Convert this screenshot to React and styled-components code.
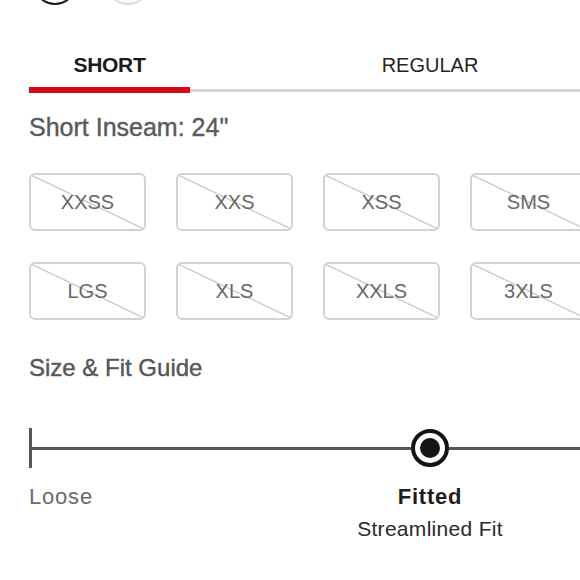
import React, { useState } from 'react';
import styled, { createGlobalStyle } from 'styled-components';

const GlobalStyle = createGlobalStyle`
  html, body {
    margin: 0;
    padding: 0;
    background: #fff;
    overflow: hidden;
  }
  body {
    font-family: 'Liberation Sans', Arial, sans-serif;
  }
`;

const tabs = ['SHORT', 'REGULAR'];
const sizes = ['XXSS', 'XXS', 'XSS', 'SMS', 'LGS', 'XLS', 'XXLS', '3XLS'];

export default function App() {
  const [active, setActive] = useState('SHORT');

  return (
    <>
      <GlobalStyle />
      <Viewport>
        <Panel>
          <Swatches>
            <Swatch $selected />
            <Swatch />
          </Swatches>

          <TabList>
            {tabs.map((t) => (
              <Tab key={t} onClick={() => setActive(t)}>
                <TabLabel $active={active === t}>{t}</TabLabel>
                <TabTrack>
                  <TabBar $active={active === t} />
                </TabTrack>
              </Tab>
            ))}
          </TabList>

          <Inseam>Short Inseam: 24"</Inseam>

          <SizeGrid>
            {sizes.map((s) => (
              <SizeChip key={s} disabled>
                {s}
              </SizeChip>
            ))}
          </SizeGrid>

          <GuideTitle>Size &amp; Fit Guide</GuideTitle>

          <Slider>
            <Tick />
            <Line $width='379px' />
            <Knob>
              <KnobDot />
            </Knob>
            <Line />
          </Slider>

          <Labels>
            <Loose>Loose</Loose>
            <FitBlock>
              <FitName>Fitted</FitName>
              <FitNote>Streamlined Fit</FitNote>
            </FitBlock>
          </Labels>
        </Panel>
      </Viewport>
    </>
  );
}

const Viewport = styled.div`
  width: 580px;
  height: 580px;
  overflow: hidden;
`;

const Panel = styled.div`
  width: 900px;
  padding-left: 29px;
  box-sizing: border-box;
`;

const Swatches = styled.div`
  display: flex;
  gap: 29px;
  margin-top: -39px;
  padding-left: 4px;
`;

const Swatch = styled.div`
  width: 44px;
  height: 44px;
  border-radius: 50%;
  box-sizing: border-box;
  border: 2px solid ${(p) => (p.$selected ? '#1c1c1c' : '#dcdcdc')};
`;

const TabList = styled.div`
  display: grid;
  grid-template-columns: 161px 480px;
  margin-top: 48px;
`;

const Tab = styled.div`
  display: flex;
  flex-direction: column;
  cursor: pointer;
`;

const TabLabel = styled.div`
  text-align: center;
  font-size: ${(p) => (p.$active ? '21px' : '20px')};
  line-height: 24px;
  font-weight: ${(p) => (p.$active ? 700 : 400)};
  color: ${(p) => (p.$active ? '#1a1a1a' : '#242424')};
  letter-spacing: ${(p) => (p.$active ? '-0.3px' : '0')};
  padding-bottom: 10px;
`;

const TabTrack = styled.div`
  height: 6px;
  display: flex;
  align-items: center;
`;

const TabBar = styled.div`
  width: 100%;
  height: ${(p) => (p.$active ? '6px' : '3px')};
  background: ${(p) => (p.$active ? '#d20a1c' : '#d4d4d4')};
`;

const Inseam = styled.div`
  margin-top: 19px;
  font-size: 25px;
  line-height: 30px;
  color: #5a5a5a;
  -webkit-text-stroke: 0.4px #5a5a5a;
`;

const SizeGrid = styled.div`
  display: grid;
  grid-template-columns: repeat(4, 117px);
  grid-auto-rows: 58px;
  column-gap: 30px;
  row-gap: 31px;
  margin-top: 31px;
`;

const SizeChip = styled.button`
  box-sizing: border-box;
  border: 2px solid #d2d2d2;
  border-radius: 6px;
  background: linear-gradient(
    to top right,
    transparent calc(50% - 1px),
    #d0d0d0 calc(50% - 0.5px),
    #d0d0d0 calc(50% + 0.5px),
    transparent calc(50% + 1px)
  );
  font-family: 'Liberation Sans', Arial, sans-serif;
  font-size: 20px;
  color: #686868;
  padding: 0;
  display: flex;
  align-items: center;
  justify-content: center;
`;

const GuideTitle = styled.div`
  margin-top: 34px;
  font-size: 24px;
  line-height: 28px;
  color: #565656;
  -webkit-text-stroke: 0.4px #565656;
`;

const Slider = styled.div`
  display: flex;
  align-items: center;
  height: 40px;
  margin-top: 46px;
`;

const Tick = styled.div`
  width: 3px;
  height: 40px;
  background: #555;
`;

const Line = styled.div`
  height: 3px;
  background: #555;
  ${(p) => (p.$width ? `width: ${p.$width};` : 'flex: 1;')}
`;

const Knob = styled.div`
  width: 38px;
  height: 38px;
  box-sizing: border-box;
  border-radius: 50%;
  border: 4px solid #141414;
  background: #fff;
  display: flex;
  align-items: center;
  justify-content: center;
`;

const KnobDot = styled.div`
  width: 20px;
  height: 20px;
  border-radius: 50%;
  background: #141414;
`;

const Labels = styled.div`
  display: grid;
  grid-template-columns: 301px 200px;
  margin-top: 16px;
`;

const Loose = styled.div`
  font-size: 22px;
  line-height: 26px;
  letter-spacing: 0.8px;
  color: #6a6a6a;
`;

const FitBlock = styled.div`
  display: flex;
  flex-direction: column;
  align-items: center;
`;

const FitName = styled.div`
  font-size: 22px;
  line-height: 26px;
  font-weight: 700;
  letter-spacing: 0.8px;
  color: #1e1e1e;
`;

const FitNote = styled.div`
  margin-top: 7px;
  font-size: 21px;
  line-height: 24px;
  letter-spacing: 0.3px;
  color: #2a2a2a;
`;
